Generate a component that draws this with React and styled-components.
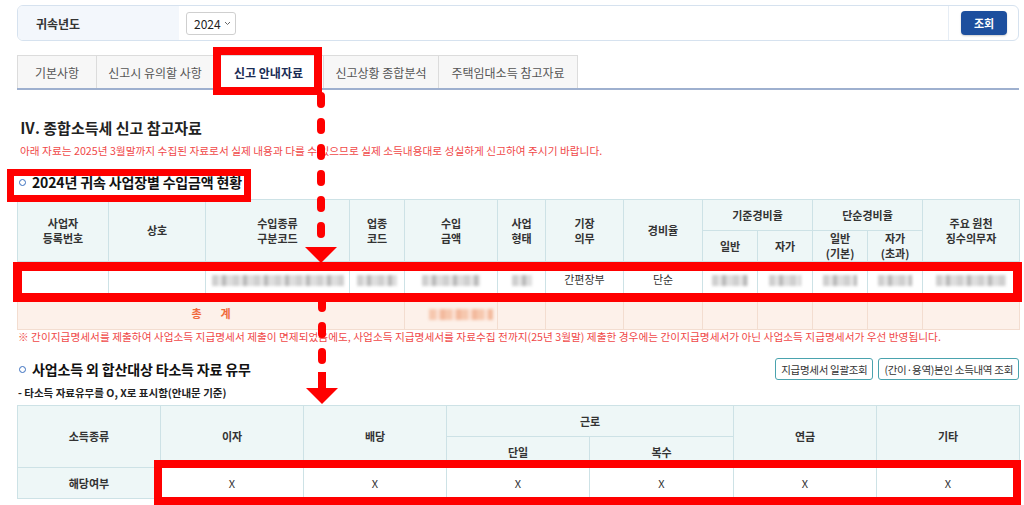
import styled, { createGlobalStyle } from "styled-components";

const GlobalStyle = createGlobalStyle`
  html, body {
    margin: 0;
    padding: 0;
    background: #fff;
    overflow: hidden;
  }
  body {
    font-family: "Noto Sans CJK KR", "Noto Sans", sans-serif;
    color: #333;
  }
`;

const Page = styled.div`
  position: relative;
  width: 1024px;
  height: 505px;
  padding: 5px 5px 0 17px;
  box-sizing: border-box;
`;

const SearchBar = styled.div`
  display: flex;
  align-items: stretch;
  height: 36px;
  border: 1px solid #d6e2ef;
  border-radius: 6px;
  overflow: hidden;
  box-sizing: border-box;
`;

const SearchLabel = styled.div`
  display: flex;
  align-items: center;
  width: 161px;
  padding-left: 18px;
  box-sizing: border-box;
  background: #f3f7fc;
  font-size: 12px;
  font-weight: 700;
  color: #333;
`;

const SearchField = styled.div`
  flex: 1;
  display: flex;
  align-items: center;
  padding-left: 7px;
`;

const YearSelect = styled.div`
  display: flex;
  align-items: center;
  gap: 3px;
  width: 50px;
  height: 23px;
  padding: 0 0 0 7px;
  border: 1px solid #cfcfcf;
  border-radius: 3px;
  font-size: 12px;
  color: #222;
  box-sizing: border-box;
`;

const SearchAction = styled.div`
  display: flex;
  align-items: center;
  padding: 0 11px 0 12px;
  border-left: 1px solid #e6edf5;
`;

const PrimaryButton = styled.button`
  width: 46px;
  height: 24px;
  border: 0;
  border-radius: 4px;
  background: #1d4f9e;
  color: #fff;
  font-family: inherit;
  font-size: 11px;
  font-weight: 700;
  box-shadow: 0 1px 2px rgba(0, 0, 0, 0.2);
`;

const Tabs = styled.div`
  display: flex;
  margin-top: 14px;
  border-bottom: 2px solid #9eb0cf;
`;

const Tab = styled.div`
  display: flex;
  align-items: center;
  justify-content: center;
  width: ${(p) => p.$w}px;
  height: 33px;
  margin-left: -1px;
  border: 1px solid #dcdcdc;
  border-bottom: 0;
  background: ${(p) => (p.$active ? "#fff" : "#f7f7f7")};
  color: ${(p) => (p.$active ? "#1b2d55" : "#555")};
  font-size: 12px;
  font-weight: ${(p) => (p.$active ? 700 : 400)};
  box-sizing: border-box;
  &:first-child {
    margin-left: 0;
  }
`;

const Heading = styled.h2`
  margin: 27px 0 0 3px;
  font-size: 15px;
  font-weight: 700;
  color: #222;
  line-height: 22px;
`;

const Notice = styled.p`
  margin: ${(p) => p.$m || "5px 0 0 3px"};
  font-size: 10.7px;
  color: #f04848;
  line-height: 14px;
  white-space: nowrap;
`;

const SectionRow = styled.div`
  display: flex;
  align-items: center;
  justify-content: space-between;
  margin-top: ${(p) => p.$top}px;
  height: ${(p) => p.$h || 20}px;
`;

const SectionTitle = styled.h3`
  display: flex;
  align-items: center;
  gap: 6px;
  margin: 0 0 0 2px;
  font-size: 14px;
  font-weight: 700;
  color: #111;
  letter-spacing: -0.15px;
  &::before {
    content: "";
    width: 5px;
    height: 5px;
    border: 1.5px solid #3a6fbf;
    border-radius: 50%;
  }
`;

const ButtonGroup = styled.div`
  display: flex;
  gap: 5px;
`;

const OutlineButton = styled.button`
  height: 22px;
  padding: 0 5px;
  border: 1px solid #4aa3ae;
  border-radius: 3px;
  background: #fff;
  color: #333;
  font-family: inherit;
  font-size: 10.5px;
  letter-spacing: -0.3px;
`;

const SubNote = styled.div`
  margin: 5px 0 0 1px;
  font-size: 10.5px;
  font-weight: 700;
  color: #222;
  line-height: 14px;
`;

const Grid = styled.table`
  width: 100%;
  margin-top: ${(p) => p.$top}px;
  table-layout: fixed;
  border-collapse: collapse;
  font-size: 11px;
`;

const Head = styled.th`
  height: ${(p) => p.$h || 30}px;
  padding: 0;
  border: 1px solid #cde2e6;
  background: #eef7f7;
  color: #333;
  font-weight: 700;
  line-height: 15px;
`;

const Cell = styled.td`
  height: ${(p) => p.$h || 33}px;
  padding: 0 0 0 ${(p) => (p.$total ? "19px" : "0")};
  border: 1px solid ${(p) => (p.$total ? "#f3ddd0" : "#cde2e6")};
  background: ${(p) => (p.$total ? "#fdf1ea" : p.$label ? "#eef7f7" : "#fff")};
  color: ${(p) => (p.$total ? "#f06a3c" : "#333")};
  font-weight: ${(p) => (p.$label || p.$total ? 700 : 400)};
  text-align: center;
  letter-spacing: ${(p) => (p.$total ? "19px" : "0")};
`;

const Smudge = styled.span`
  display: inline-block;
  width: ${(p) => p.$w}px;
  height: 11px;
  vertical-align: middle;
  letter-spacing: 0;
  background: ${(p) =>
    p.$peach
      ? "repeating-linear-gradient(90deg, #f6c7ae 0 7px, #fbe0d2 7px 11px, #f3b99c 11px 16px)"
      : "repeating-linear-gradient(90deg, #cfcfcf 0 6px, #e6e6e6 6px 10px, #b8b8b8 10px 14px, #dedede 14px 21px)"};
  filter: blur(1.6px);
`;

const Marker = styled.div`
  position: absolute;
  left: ${(p) => p.$x}px;
  top: ${(p) => p.$y}px;
  width: ${(p) => p.$w}px;
  height: ${(p) => p.$h}px;
  border: ${(p) => p.$t}px solid #ff0000;
  box-sizing: border-box;
  pointer-events: none;
`;

const TrailSvg = styled.svg`
  position: absolute;
  left: 296px;
  top: 86px;
  width: 52px;
  height: 322px;
  pointer-events: none;
`;

const Chevron = () => (
  <svg width="7" height="5" viewBox="0 0 7 5">
    <path d="M1 1l2.5 2.5L6 1" fill="none" stroke="#666" strokeWidth="1" />
  </svg>
);

const ArrowTrail = () => (
  <TrailSvg viewBox="296 86 52 322">
    <line x1="321" y1="96" x2="321" y2="234" stroke="#ff0000" strokeWidth="8" strokeLinecap="round" strokeDasharray="8 18" />
    <polygon points="305,247 337,247 321,263" fill="#ff0000" />
    <line x1="322" y1="300" x2="322" y2="360" stroke="#ff0000" strokeWidth="8" strokeLinecap="round" strokeDasharray="8 18" />
    <rect x="318" y="372" width="8" height="18" fill="#ff0000" />
    <polygon points="306,388 338,388 322,404" fill="#ff0000" />
  </TrailSvg>
);

const tabs = [
  { label: "기본사항", w: 80 },
  { label: "신고시 유의할 사항", w: 118 },
  { label: "신고 안내자료", w: 111, active: true },
  { label: "신고상황 종합분석", w: 116 },
  { label: "주택임대소득 참고자료", w: 140 },
];

const incomeCols = [91, 97, 144, 55, 93, 48, 78, 79, 55, 55, 55, 55, 97];
const otherCols = [143, 143, 143, 143, 144, 143, 143];

export default function App() {
  return (
    <Page>
      <GlobalStyle />
      <SearchBar>
        <SearchLabel>귀속년도</SearchLabel>
        <SearchField>
          <YearSelect>
            2024 <Chevron />
          </YearSelect>
        </SearchField>
        <SearchAction>
          <PrimaryButton>조회</PrimaryButton>
        </SearchAction>
      </SearchBar>

      <Tabs>
        {tabs.map((t) => (
          <Tab key={t.label} $w={t.w} $active={t.active}>
            {t.label}
          </Tab>
        ))}
      </Tabs>

      <Heading>Ⅳ. 종합소득세 신고 참고자료</Heading>
      <Notice>
        아래 자료는 2025년 3월말까지 수집된 자료로서 실제 내용과 다를 수 있으므로 실제 소득내용대로 성실하게 신고하여 주시기 바랍니다.
      </Notice>

      <SectionRow $top={14}>
        <SectionTitle>2024년 귀속 사업장별 수입금액 현황</SectionTitle>
      </SectionRow>

      <Grid $top={7}>
        <colgroup>
          {incomeCols.map((w, i) => (
            <col key={i} style={{ width: w }} />
          ))}
        </colgroup>
        <thead>
          <tr>
            <Head rowSpan={2}>사업자<br />등록번호</Head>
            <Head rowSpan={2}>상호</Head>
            <Head rowSpan={2}>수입종류<br />구분코드</Head>
            <Head rowSpan={2}>업종<br />코드</Head>
            <Head rowSpan={2}>수입<br />금액</Head>
            <Head rowSpan={2}>사업<br />형태</Head>
            <Head rowSpan={2}>기장<br />의무</Head>
            <Head rowSpan={2}>경비율</Head>
            <Head colSpan={2}>기준경비율</Head>
            <Head colSpan={2}>단순경비율</Head>
            <Head rowSpan={2}>주요 원천<br />징수의무자</Head>
          </tr>
          <tr>
            <Head $h={30}>일반</Head>
            <Head $h={30}>자가</Head>
            <Head $h={30}>일반<br />(기본)</Head>
            <Head $h={30}>자가<br />(초과)</Head>
          </tr>
        </thead>
        <tbody>
          <tr>
            <Cell $h={33} />
            <Cell $h={33} />
            <Cell $h={33}><Smudge $w={132} /></Cell>
            <Cell $h={33}><Smudge $w={40} /></Cell>
            <Cell $h={33}><Smudge $w={58} /></Cell>
            <Cell $h={33}><Smudge $w={20} /></Cell>
            <Cell $h={33}>간편장부</Cell>
            <Cell $h={33}>단순</Cell>
            <Cell $h={33}><Smudge $w={36} /></Cell>
            <Cell $h={33}><Smudge $w={32} /></Cell>
            <Cell $h={33}><Smudge $w={34} /></Cell>
            <Cell $h={33}><Smudge $w={34} /></Cell>
            <Cell $h={33}><Smudge $w={70} /></Cell>
          </tr>
          <tr>
            <Cell $total colSpan={4}>총계</Cell>
            <Cell $total><Smudge $peach $w={64} /></Cell>
            {Array.from({ length: 8 }).map((_, i) => (
              <Cell key={i} $total />
            ))}
          </tr>
        </tbody>
      </Grid>

      <Notice $m="0 0 0 1px">
        ※ 간이지급명세서를 제출하여 사업소득 지급명세서 제출이 면제되었음에도, 사업소득 지급명세서를 자료수집 전까지(25년 3월말) 제출한 경우에는 간이지급명세서가 아닌 사업소득 지급명세서가 우선 반영됩니다.
      </Notice>

      <SectionRow $top={13} $h={24}>
        <SectionTitle>사업소득 외 합산대상 타소득 자료 유무</SectionTitle>
        <ButtonGroup>
          <OutlineButton>지급명세서 일괄조회</OutlineButton>
          <OutlineButton>(간이·용역)본인 소득내역 조회</OutlineButton>
        </ButtonGroup>
      </SectionRow>
      <SubNote>- 타소득 자료유무를 O, X로 표시함(안내문 기준)</SubNote>

      <Grid $top={5}>
        <colgroup>
          {otherCols.map((w, i) => (
            <col key={i} style={{ width: w }} />
          ))}
        </colgroup>
        <thead>
          <tr>
            <Head rowSpan={2}>소득종류</Head>
            <Head rowSpan={2}>이자</Head>
            <Head rowSpan={2}>배당</Head>
            <Head colSpan={2} $h={30}>근로</Head>
            <Head rowSpan={2}>연금</Head>
            <Head rowSpan={2}>기타</Head>
          </tr>
          <tr>
            <Head $h={30}>단일</Head>
            <Head $h={30}>복수</Head>
          </tr>
        </thead>
        <tbody>
          <tr>
            <Cell $label $h={30}>해당여부</Cell>
            {Array.from({ length: 6 }).map((_, i) => (
              <Cell key={i} $h={30}>X</Cell>
            ))}
          </tr>
        </tbody>
      </Grid>

      <Marker $x={213} $y={47} $w={109} $h={48} $t={8} />
      <Marker $x={7} $y={169} $w={244} $h={33} $t={7} />
      <Marker $x={13} $y={262} $w={1009} $h={40} $t={9} />
      <Marker $x={154} $y={460} $w={867} $h={45} $t={8} />
      <ArrowTrail />
    </Page>
  );
}
